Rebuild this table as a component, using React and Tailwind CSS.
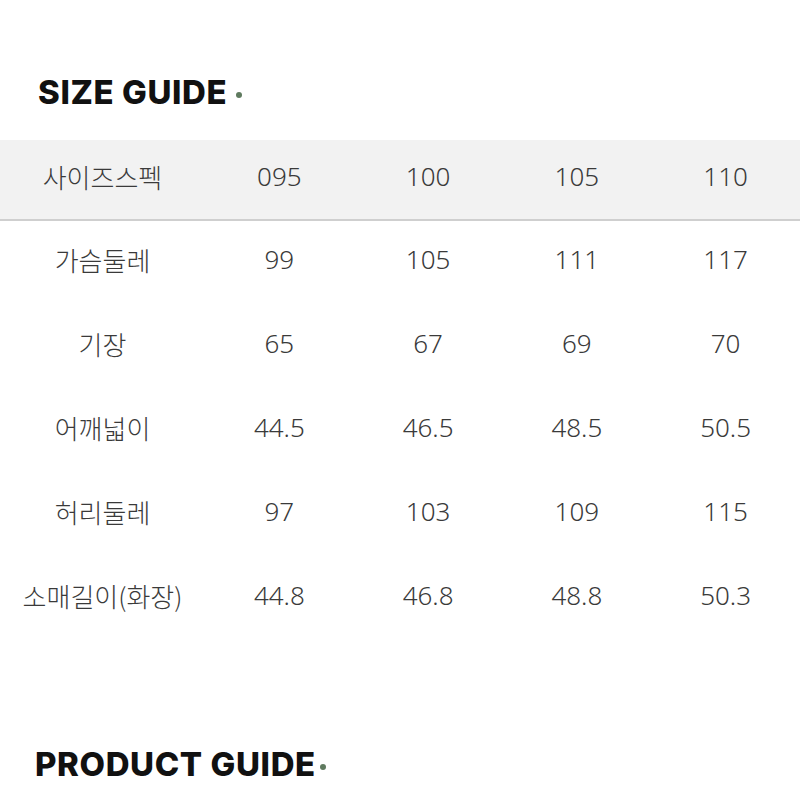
const sizes = ["095", "100", "105", "110"];

const rows = [
  { label: "가슴둘레", values: ["99", "105", "111", "117"] },
  { label: "기장", values: ["65", "67", "69", "70"] },
  { label: "어깨넓이", values: ["44.5", "46.5", "48.5", "50.5"] },
  { label: "허리둘레", values: ["97", "103", "109", "115"] },
  { label: "소매길이(화장)", values: ["44.8", "46.8", "48.8", "50.3"] },
];

const Title = ({ children, className, dotGap }) => (
  <h2 className={`flex items-center font-['Inter',sans-serif] font-extrabold text-[#111] tracking-[0.6px] ${className}`}>
    {children}
    <span className={`mt-[6px] inline-block h-[6px] w-[6px] rounded-full bg-[#5f7a5f] ${dotGap}`}></span>
  </h2>
);

const App = () => {
  return (
    <div className="w-[800px] h-[800px] bg-white overflow-hidden font-['Noto_Sans_CJK_KR','Noto_Sans',sans-serif] text-[#3a3a3a]">
      <Title className="pt-[70px] pl-[38px] text-[33px] leading-[44px]" dotGap="ml-[9px]">SIZE GUIDE</Title>

      <table className="mt-[26px] w-[800px] table-fixed border-collapse text-[26px] font-light">
        <colgroup>
          <col className="w-[205px]" />
          <col />
          <col />
          <col />
          <col />
        </colgroup>
        <thead>
          <tr className="h-[80px] bg-[#f2f2f2] border-b-2 border-[#cfcfcf]">
            <th className="font-light text-center pb-[6px]">사이즈스펙</th>
            {sizes.map((s) => (
              <th key={s} className="font-['Noto_Sans',sans-serif] font-light text-center pb-[6px]">{s}</th>
            ))}
          </tr>
        </thead>
        <tbody>
          {rows.map((row) => (
            <tr key={row.label} className="h-[84px]">
              <td className="text-center pb-[6px]">{row.label}</td>
              {row.values.map((v, i) => (
                <td key={i} className="font-['Noto_Sans',sans-serif] text-center pb-[6px]">{v}</td>
              ))}
            </tr>
          ))}
        </tbody>
      </table>

      <Title className="mt-[102px] pl-[35px] text-[33px] leading-[44px]" dotGap="ml-[4px]">PRODUCT GUIDE</Title>
    </div>
  );
};

export default App;
